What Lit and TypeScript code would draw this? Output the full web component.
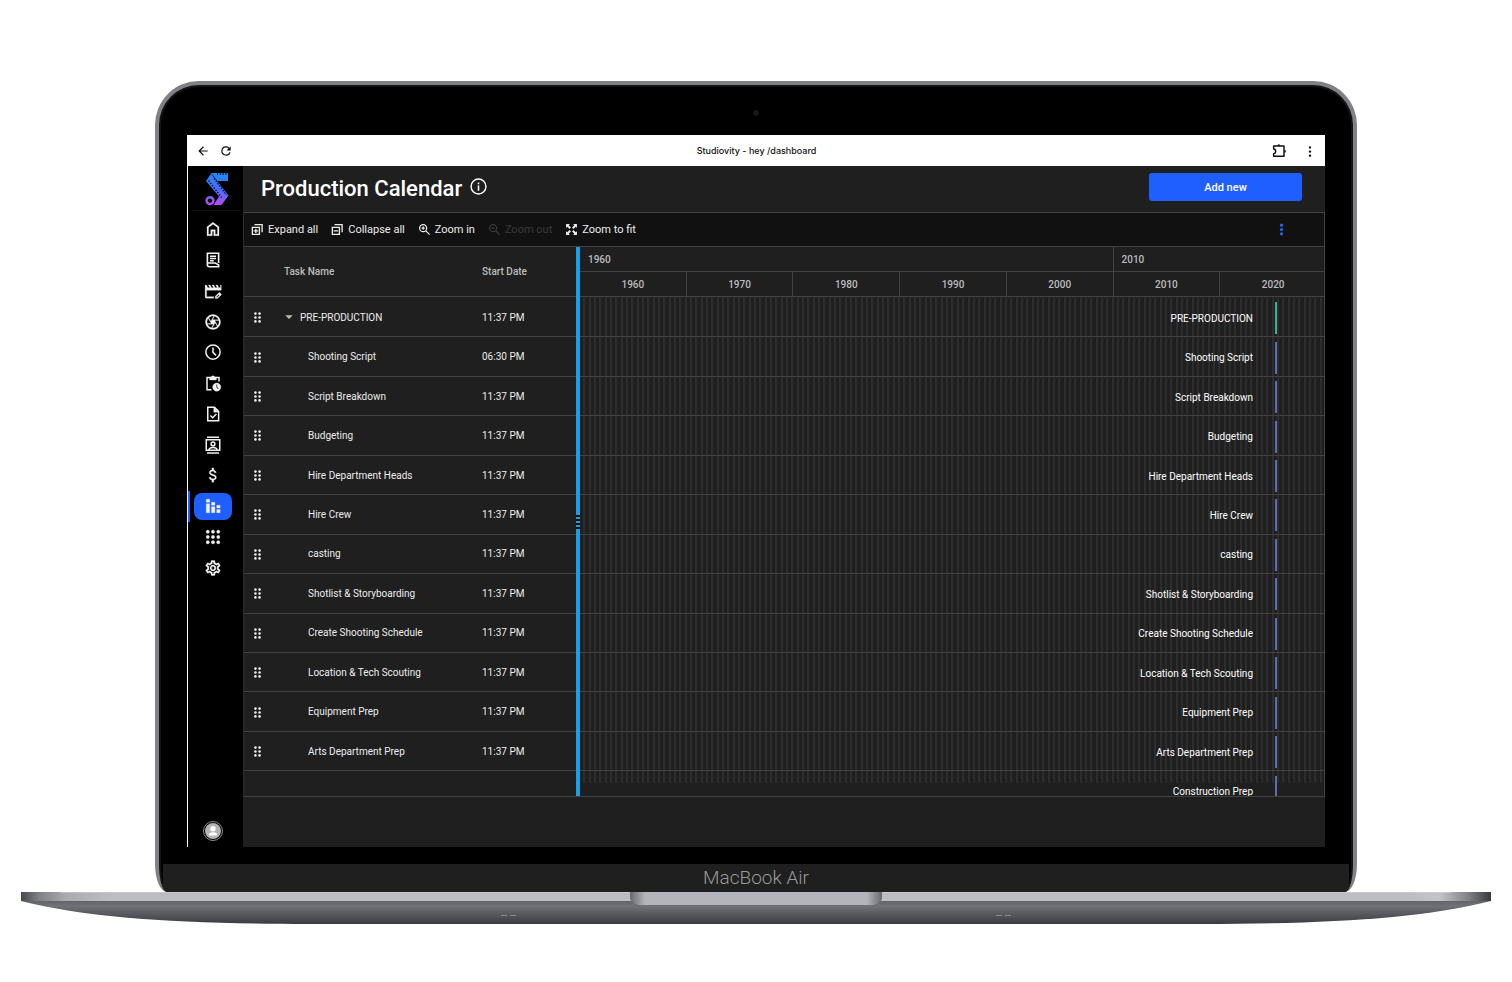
import { LitElement, html, css, svg } from "lit";
import { customElement, property, state } from "lit/decorators.js";
import { classMap } from "lit/directives/class-map.js";

interface Task {
  name: string;
  start: string;
  group?: boolean;
}

const TASKS: Task[] = [
  { name: "PRE-PRODUCTION", start: "11:37 PM", group: true },
  { name: "Shooting Script", start: "06:30 PM" },
  { name: "Script Breakdown", start: "11:37 PM" },
  { name: "Budgeting", start: "11:37 PM" },
  { name: "Hire Department Heads", start: "11:37 PM" },
  { name: "Hire Crew", start: "11:37 PM" },
  { name: "casting", start: "11:37 PM" },
  { name: "Shotlist & Storyboarding", start: "11:37 PM" },
  { name: "Create Shooting Schedule", start: "11:37 PM" },
  { name: "Location & Tech Scouting", start: "11:37 PM" },
  { name: "Equipment Prep", start: "11:37 PM" },
  { name: "Arts Department Prep", start: "11:37 PM" },
];

const DECADES = [1960, 1970, 1980, 1990, 2000, 2010, 2020];

const ICONS: Record<string, unknown> = {
  home: svg`<path d="M6 19h3v-6h6v6h3v-9l-6-4.5L6 10v9Zm-2 2V9l8-6 8 6v12h-7v-6h-2v6H4Z"/>`,
  script: svg`<path fill="none" stroke="currentColor" stroke-width="2.200" d="M19.500 16V3h-15v15.500A2.500 2.500 0 0 0 7 21h12.500v-2.500L15 16H4.500M8 7h8M8 10h8M8 13h5"/>`,
  clapper: svg`<path d="M1.500 4h1.700l2 3.600h2.700L5.900 4h2.200l2 3.600h2.700L10.800 4H13l2 3.600h2.700L15.700 4h2.200l2 3.600H22V4h1v7H3.500v8.500H13v2H3.500a2 2 0 0 1-2-2z"/><path d="M15 22v-3l5.500-5.500 3 3L18 22zm1.700-1.500h.8l3-3-.9-.9-2.900 3z"/>`,
  shutter: svg`<path d="M14.250 2.260l-.08-.04-.01.02C13.460 2.090 12.740 2 12 2 6.480 2 2 6.480 2 12s4.480 10 10 10 10-4.480 10-10c0-4.750-3.310-8.720-7.750-9.740zM19.410 9h-7.990l2.710-4.700c2.400.66 4.350 2.420 5.280 4.700zM13.100 4.080L10.270 9l-1.150 2L6.400 6.300C7.840 4.880 9.820 4 12 4c.37 0 .74.03 1.100.08zM5.700 7.090L8.540 12l1.150 2H4.260C4.100 13.360 4 12.690 4 12c0-1.850.64-3.550 1.700-4.910zM4.590 15h7.980l-2.710 4.700c-2.400-.67-4.340-2.420-5.270-4.700zm6.310 4.910L14.890 13l2.720 4.700C16.160 19.120 14.180 20 12 20c-.38 0-.74-.04-1.100-.09zm7.400-3l-4-6.910h5.430c.17.64.27 1.310.27 2 0 1.850-.64 3.550-1.700 4.910z"/>`,
  clock: svg`<g fill="none" stroke="currentColor" stroke-width="2"><circle cx="12" cy="12" r="9.500"/><path d="M12 6v6.500l4 4"/></g>`,
  clipboard: svg`<g fill="none" stroke="currentColor" stroke-width="2"><path d="M10 21H4V4.500h16V10"/></g><path d="M7.500 4h2.200a2.500 2.500 0 0 1 4.600 0h2.200v4h-9z"/><path fill-rule="evenodd" d="M17 12a5.500 5.500 0 1 0 0 11 5.500 5.500 0 0 0 0-11zm-.6 2h1.200v3.200l2 2-.9.900-2.300-2.400z"/>`,
  doc: svg`<g fill="none" stroke="currentColor" stroke-width="2"><path d="M5 3h9l5.500 5.500V21H5z"/><path d="M8.500 14l3 3 5-5"/></g><path d="M13 3v6.500h6.500z"/>`,
  contact: svg`<g fill="none" stroke="currentColor" stroke-width="2"><path d="M4 1.500h16M4 22.500h16M3 5h18v14H3z"/><circle cx="12" cy="10.500" r="2.500"/><path d="M6.500 19c0-5 11-5 11 0"/></g>`,
  money: svg`<path d="M11.800 10.900c-2.270-.59-3-1.200-3-2.150 0-1.090 1.010-1.850 2.700-1.850 1.780 0 2.440.85 2.500 2.100h2.210c-.07-1.720-1.120-3.300-3.210-3.810V2.500h-2.500v2.660c-1.940.42-3.500 1.680-3.500 3.610 0 2.310 1.910 3.460 4.700 4.130 2.500.6 3 1.480 3 2.410 0 .69-.49 1.790-2.700 1.790-2.060 0-2.870-.92-2.980-2.100h-2.200c.12 2.190 1.260 3.420 3.680 3.830V21.500h2.500v-2.650c1.950-.37 3.500-1.500 3.500-3.550 0-2.840-2.430-3.810-4.700-4.400z"/>`,
  chart: svg`<path d="M3 3h4.500v4H3zM3 9h4.500v12H3zM10 7h4.500v4H10zM10 13h4.500v8H10zM17 11h4.500v3.500H17zM17 16.500h4.500V21H17z"/>`,
  apps: svg`${[5, 12, 19].map((y) => [5, 12, 19].map((x) => svg`<circle cx=${x} cy=${y} r="2.200"/>`))}`,
  settings: svg`<path d="M19.430 12.980c.04-.32.07-.64.07-.98 0-.34-.03-.66-.07-.98l2.110-1.650c.19-.15.24-.42.12-.64l-2-3.460c-.09-.16-.26-.25-.44-.25-.06 0-.12.010-.17.030l-2.490 1c-.52-.4-1.080-.73-1.690-.98l-.38-2.650C14.460 2.180 14.250 2 14 2h-4c-.25 0-.46.18-.49.42l-.38 2.650c-.61.25-1.170.59-1.690.98l-2.490-1c-.06-.02-.12-.03-.18-.03-.17 0-.34.09-.43.25l-2 3.460c-.13.22-.07.49.12.64l2.110 1.650c-.04.32-.07.65-.07.98 0 .33.03.66.07.98l-2.110 1.650c-.19.15-.24.42-.12.64l2 3.460c.09.16.26.25.44.25.06 0 .12-.01.17-.03l2.490-1c.52.4 1.080.73 1.690.98l.38 2.650c.03.24.24.42.49.42h4c.25 0 .46-.18.49-.42l.38-2.650c.61-.25 1.170-.59 1.690-.98l2.490 1c.06.02.12.03.18.03.17 0 .34-.09.43-.25l2-3.460c.12-.22.07-.49-.12-.64l-2.110-1.650zm-1.980-1.710c.04.31.05.52.05.73 0 .21-.02.43-.05.73l-.14 1.130.89.7 1.080.84-.7 1.210-1.270-.51-1.040-.42-.9.68c-.43.32-.84.56-1.250.73l-1.060.43-.16 1.130-.2 1.350h-1.400l-.19-1.350-.16-1.130-1.060-.43c-.43-.18-.83-.41-1.230-.71l-.91-.7-1.060.43-1.270.51-.7-1.210 1.080-.84.89-.7-.14-1.130c-.03-.31-.05-.54-.05-.74s.02-.43.05-.73l.14-1.130-.89-.7-1.080-.84.7-1.210 1.270.51 1.040.42.9-.68c.43-.32.84-.56 1.250-.73l1.060-.43.16-1.130.2-1.350h1.390l.19 1.350.16 1.130 1.060.43c.43.18.83.41 1.230.71l.91.7 1.060-.43 1.270-.51.7 1.210-1.070.85-.89.7.14 1.130zM12 8c-2.210 0-4 1.790-4 4s1.790 4 4 4 4-1.790 4-4-1.790-4-4-4zm0 6c-1.100 0-2-.9-2-2s.9-2 2-2 2 .9 2 2-.9 2-2 2z"/>`,
  expand: svg`<path fill="none" stroke="currentColor" stroke-width="2.500" d="M2.500 8h13v13h-13zM6.500 3h14v14M9 10.500v8M5 14.500h8"/>`,
  collapse: svg`<path fill="none" stroke="currentColor" stroke-width="2.500" d="M2.500 8h13v13h-13zM6.500 3h14v14M5 14.500h8"/>`,
  zoomIn: svg`<path fill="none" stroke="currentColor" stroke-width="2.300" d="M14.500 14.500l7 7M9.500 3a6.500 6.500 0 1 0 0 13 6.500 6.500 0 0 0 0-13zM9.500 6.500v6M6.500 9.500h6"/>`,
  zoomOut: svg`<path fill="none" stroke="currentColor" stroke-width="2.300" d="M14.500 14.500l7 7M9.500 3a6.500 6.500 0 1 0 0 13 6.500 6.500 0 0 0 0-13zM6.500 9.500h6"/>`,
  fit: svg`<path d="M2 2h7L6.800 4.200 11 8.400 8.400 11 4.200 6.800 2 9zM22 2v7l-2.200-2.200-4.200 4.200L13 8.400l4.200-4.200L15 2zM2 22v-7l2.200 2.200L8.400 13l2.600 2.600-4.200 4.200L9 22zM22 22h-7l2.200-2.200-4.200-4.200 2.600-2.600 4.200 4.200L22 15z"/>`,
  back: svg`<path d="M20 11H7.830l5.590-5.590L12 4l-8 8 8 8 1.410-1.410L7.830 13H20v-2z"/>`,
  reload: svg`<path d="M17.650 6.350A7.958 7.958 0 0 0 12 4a8 8 0 1 0 7.730 10h-2.080A6 6 0 1 1 12 6c1.660 0 3.140.69 4.220 1.780L13 11h7V4l-2.350 2.350z"/>`,
  puzzle: svg`<path fill="none" stroke="currentColor" stroke-width="2.200" stroke-linejoin="round" d="M4 4.500h15.500V20H4v-4c4 0 4-7 0-7z"/><path d="M9.500 4a2.300 2.300 0 0 1 4.600 0zM20 10a2.300 2.300 0 0 1 0 4.600z"/>`,
  more: svg`<circle cx="12" cy="6" r="2"/><circle cx="12" cy="13" r="2"/><circle cx="12" cy="20" r="2"/>`,
  moreBold: svg`<circle cx="12" cy="4" r="3"/><circle cx="12" cy="12" r="3"/><circle cx="12" cy="20" r="3"/>`,
  info: svg`<circle cx="12" cy="12" r="10.500" fill="none" stroke="currentColor" stroke-width="2"/><path d="M10.900 10.500h2.200V18h-2.200zM10.900 6.300h2.200v2.400h-2.200z"/>`,
  grip: svg`${[3.500, 12, 20.500].map((y) => [7.500, 16.500].map((x) => svg`<circle cx=${x} cy=${y} r="2.800"/>`))}`,
  caret: svg`<path d="M3 8h18l-9 9z"/>`,
};

@customElement("ui-icon")
export class UiIcon extends LitElement {
  static styles = css`
    :host {
      display: inline-flex;
      flex: none;
      width: 16px;
      height: 16px;
    }
    .glyph {
      width: 100%;
      height: 100%;
      fill: currentColor;
      display: block;
    }
  `;
  @property() name = "";
  render() {
    return html`<svg class="glyph" viewBox="0 0 24 24" aria-hidden="true">${ICONS[this.name]}</svg>`;
  }
}

@customElement("browser-bar")
export class BrowserBar extends LitElement {
  static styles = css`
    :host {
      display: grid;
      grid-template-columns: 1fr auto 1fr;
      align-items: center;
      height: 31px;
      padding: 0 8px 0 9px;
      box-sizing: border-box;
      background: #fff;
      color: #111;
      font-family: Inter, sans-serif;
      font-size: 9px;
      font-weight: 500;
    }
    .side {
      display: flex;
      align-items: center;
      gap: 9px;
    }
    .end {
      justify-content: flex-end;
      gap: 16px;
    }
    .btn {
      display: flex;
      padding: 0;
      border: 0;
      background: none;
      color: inherit;
    }
    .small {
      width: 14px;
      height: 14px;
    }
  `;
  render() {
    return html`
      <div class="side">
        <button class="btn" aria-label="Back"><ui-icon class="small" name="back"></ui-icon></button>
        <button class="btn" aria-label="Reload"><ui-icon class="small" name="reload"></ui-icon></button>
      </div>
      <span>Studiovity - hey /dashboard</span>
      <div class="side end">
        <button class="btn" aria-label="Extensions"><ui-icon name="puzzle"></ui-icon></button>
        <button class="btn" aria-label="Menu"><ui-icon class="small" name="more"></ui-icon></button>
      </div>
    `;
  }
}

@customElement("side-nav")
export class SideNav extends LitElement {
  static styles = css`
    :host {
      display: flex;
      flex-direction: column;
      align-items: stretch;
      flex: none;
      width: 56px;
      box-sizing: border-box;
      border-left: 1px solid #fff;
      background: #000;
      color: #f2f2f2;
    }
    .logo {
      display: flex;
      justify-content: center;
      padding: 5px 0 4px;
      margin: 0 3px 3px;
      border-bottom: 1px solid #111;
    }
    .mark {
      width: 28px;
      height: 35px;
    }
    .links {
      display: grid;
      grid-template-rows: repeat(12, 1fr);
      height: 369px;
    }
    .link {
      display: flex;
      align-items: center;
      padding: 0 12px 0 4px;
      border-left: 2px solid transparent;
      color: inherit;
    }
    .pill {
      display: flex;
      align-items: center;
      justify-content: center;
      width: 38px;
      height: 27px;
      border-radius: 8px;
    }
    .active {
      border-left-color: #1f5eff;
      border-radius: 0 2px 2px 0;
    }
    .active .pill {
      background: #1f5eff;
    }
    .nav-icon {
      width: 18px;
      height: 18px;
      stroke: currentColor;
      stroke-width: 0.4;
    }
    .user {
      display: block;
      width: 22px;
      height: 22px;
      margin: auto 0 5px 14px;
      padding: 0;
      border: 0;
      background: none;
    }
    .avatar {
      display: block;
      width: 22px;
      height: 22px;
    }
  `;
  @property() active = "chart";
  private items: [string, string][] = [
    ["home", "Home"],
    ["script", "Script"],
    ["clapper", "Breakdown"],
    ["shutter", "Shots"],
    ["clock", "Schedule"],
    ["clipboard", "Stripboard"],
    ["doc", "Documents"],
    ["contact", "Contacts"],
    ["money", "Budget"],
    ["chart", "Production calendar"],
    ["apps", "Apps"],
    ["settings", "Settings"],
  ];
  render() {
    return html`
      <div class="logo">
        <svg class="mark" viewBox="0 0 28 35" role="img" aria-label="Studiovity">
          <defs>
            <linearGradient id="ink" gradientUnits="userSpaceOnUse" x1="14" y1="2" x2="10" y2="34">
              <stop offset="0" stop-color="#1c8bf5" />
              <stop offset="0.5" stop-color="#4a6cf5" />
              <stop offset="1" stop-color="#b64df5" />
            </linearGradient>
          </defs>
          <path
            fill="url(#ink)"
            fill-rule="evenodd"
            d="M9.500 2H26V10H15L26.500 24.500L19.500 34H11.500L17 25.500L4 10Z M8 25a4.600 4.600 0 1 0 .01 0z M8 27.400a2.200 2.200 0 1 1-.01 0z"
          />
          <path d="M6.500 9.500L19.500 26.500M12 7.500L24.500 24" stroke="#0c1450" stroke-width="1.400" stroke-dasharray="1.500 1.400" fill="none" />
          <path d="M15 3H26" stroke="#000" stroke-width="2" stroke-dasharray="1 1.800" fill="none" />
          <path d="M10 3.500L15 10" stroke="#0c1450" stroke-width="0.900" />
        </svg>
      </div>
      <nav class="links">
        ${this.items.map(
          ([icon, label]) => html`<a
            class=${classMap({ link: true, active: icon === this.active })}
            href="#"
            aria-label=${label}
            ><span class="pill"><ui-icon class="nav-icon" name=${icon}></ui-icon></span
          ></a>`
        )}
      </nav>
      <button class="user" aria-label="Account">
        <svg class="avatar" viewBox="0 0 22 22">
          <circle cx="11" cy="11" r="9.500" fill="none" stroke="#8a8a8a" />
          <circle cx="11" cy="11" r="8" fill="#b4b4b4" />
          <circle cx="11" cy="8.700" r="2.700" fill="#fff" />
          <path d="M7 15.500V14.500c0-3 8-3 8 0v1z" fill="#fff" />
        </svg>
      </button>
    `;
  }
}

@customElement("gantt-chart")
export class GanttChart extends LitElement {
  static styles = css`
    :host {
      display: flex;
      border: solid #424242;
      border-width: 1px 1px 1px 0;
      font-size: 10px;
      color: #ededed;
    }
    .tasks {
      display: block;
      width: 332px;
      flex: none;
      font-size: inherit;
    }
    .tasks thead,
    .tasks tbody {
      display: block;
    }
    .tasks tr {
      display: grid;
      grid-template-columns: 40px 198px 1fr;
      align-items: center;
      border-bottom: 1px solid #424242;
    }
    .tasks thead tr {
      height: 50px;
      box-sizing: border-box;
    }
    .tasks th {
      padding: 0;
      text-align: left;
      font-weight: 500;
      color: #bdbdbd;
    }
    .tasks td {
      padding: 0;
    }
    .tasks .rows,
    .rows {
      display: grid;
      height: 499px;
      box-sizing: border-box;
      padding-top: 1px;
      overflow: hidden;
      grid-template-rows: repeat(12, minmax(0, 8fr)) minmax(0, 5fr);
    }
    .grip {
      width: 11px;
      height: 11px;
      margin-left: 8px;
      vertical-align: middle;
    }
    .name {
      padding-left: 24px;
    }
    .name-group {
      display: flex;
      align-items: center;
      gap: 6px;
    }
    .toggle {
      display: flex;
      padding: 0;
      border: 0;
      background: none;
      color: #bdbdbd;
    }
    .caret {
      width: 10px;
      height: 10px;
    }
    .splitter {
      display: flex;
      flex-direction: column;
      width: 4px;
      flex: none;
      gap: 1px;
      background: #111;
    }
    .rail {
      flex: 1;
      background: #189fe6;
    }
    .knobs {
      display: flex;
      flex-direction: column;
      gap: 2px;
      padding: 1px 0;
    }
    .knob {
      height: 2px;
      background: #189fe6;
    }
    .timeline {
      flex: 1;
      min-width: 0;
      overflow: hidden;
    }
    .canvas {
      width: calc(100% + 3px);
    }
    .scale {
      display: grid;
      grid-template-columns: repeat(7, 1fr);
      height: 25px;
      box-sizing: border-box;
      border-bottom: 1px solid #424242;
      font-weight: 500;
      color: #bdbdbd;
    }
    .era {
      display: flex;
      align-items: center;
      padding-left: 8px;
      border-right: 1px solid #424242;
      grid-column: span 5;
    }
    .late {
      grid-column: span 2;
    }
    .decade {
      display: flex;
      align-items: center;
      justify-content: center;
      border-right: 1px solid #424242;
    }
    .lanes {
      background: repeating-linear-gradient(
          90deg,
          #1f1f1f 0,
          #1f1f1f calc(100% / 140 - 2px),
          #2d2d2d calc(100% / 140 - 2px),
          #2d2d2d calc(100% / 140)
        )
        top / 100% calc(100% - 13px) no-repeat;
    }
    .lane {
      display: flex;
      justify-content: flex-end;
      align-items: center;
      gap: 22px;
      padding: 2px 50px 0 0;
      border-bottom: 1px solid #424242;
      color: #fff;
    }
    .cut {
      height: 37px;
      border-bottom: 0;
    }
    .bar {
      width: 2px;
      height: 32px;
      background: #5c6db3;
    }
    .bar-group {
      background: #3fb295;
    }
  `;

  private taskRow(t: Task) {
    return html`<tr>
      <td><ui-icon class="grip" name="grip"></ui-icon></td>
      <td>
        ${t.group
          ? html`<div class="name-group">
              <button class="toggle" aria-label="Collapse group"><ui-icon class="caret" name="caret"></ui-icon></button
              >${t.name}
            </div>`
          : html`<div class="name">${t.name}</div>`}
      </td>
      <td>${t.start}</td>
    </tr>`;
  }

  private lane(t: Task, cut = false) {
    return html`<div class=${classMap({ lane: true, cut })}>
      <span>${t.name}</span><i class=${classMap({ bar: true, "bar-group": !!t.group })}></i>
    </div>`;
  }

  render() {
    return html`
      <table class="tasks">
        <thead>
          <tr>
            <th></th>
            <th>Task Name</th>
            <th>Start Date</th>
          </tr>
        </thead>
        <tbody class="rows">
          ${TASKS.map((t) => this.taskRow(t))}
        </tbody>
      </table>
      <div class="splitter" role="separator" aria-orientation="vertical">
        <div class="rail"></div>
        <div class="knobs"><i class="knob"></i><i class="knob"></i><i class="knob"></i></div>
        <div class="rail"></div>
      </div>
      <div class="timeline">
        <div class="canvas">
          <div class="scale">
            <div class="era">1960</div>
            <div class="era late">2010</div>
          </div>
          <div class="scale">${DECADES.map((d) => html`<div class="decade">${d}</div>`)}</div>
          <div class="rows lanes">
            ${TASKS.map((t) => this.lane(t))} ${this.lane({ name: "Construction Prep", start: "11:37 PM" }, true)}
          </div>
        </div>
      </div>
    `;
  }
}

@customElement("calendar-page")
export class CalendarPage extends LitElement {
  static styles = css`
    :host {
      display: block;
      flex: 1;
      min-width: 0;
      padding-bottom: 50px;
      background: #1f1f1f;
      color: #fff;
      font-family: Roboto, sans-serif;
    }
    .head {
      display: flex;
      align-items: center;
      height: 46px;
      padding: 0 23px 0 18px;
    }
    .title {
      margin: 0;
      font-size: 22px;
      line-height: 28px;
      font-weight: 500;
    }
    .info {
      width: 17px;
      height: 17px;
      margin: 0 0 5px 8px;
    }
    .add {
      width: 153px;
      height: 28px;
      margin: 0 0 4px auto;
      border: 0;
      border-radius: 3px;
      background: #1f5eff;
      color: #fff;
      font: 500 11px Roboto, sans-serif;
    }
    .panel {
      border-left: 1px solid #2c2c2c;
    }
    .toolbar {
      display: flex;
      align-items: center;
      gap: 13px;
      height: 34px;
      box-sizing: border-box;
      padding: 0 36px 0 7px;
      border: solid #424242;
      border-width: 1px 1px 0 0;
      background: #111;
    }
    .tool {
      display: flex;
      align-items: center;
      gap: 4px;
      padding: 0;
      border: 0;
      background: none;
      color: #ededed;
      font: 11px Roboto, sans-serif;
      white-space: nowrap;
    }
    .tool:disabled {
      color: #3a3a3a;
    }
    .tool-icon {
      width: 13px;
      height: 13px;
    }
    .more {
      margin-left: auto;
      color: #2a62f0;
    }
  `;
  @state() private atMinZoom = true;
  private tool(icon: string, label: string, disabled = false) {
    return html`<button class="tool" ?disabled=${disabled}>
      <ui-icon class="tool-icon" name=${icon}></ui-icon>${label}
    </button>`;
  }
  render() {
    return html`
      <header class="head">
        <h1 class="title">Production Calendar</h1>
        <ui-icon class="info" name="info"></ui-icon>
        <button class="add">Add new</button>
      </header>
      <div class="panel">
        <div class="toolbar">
          ${this.tool("expand", "Expand all")} ${this.tool("collapse", "Collapse all")}
          ${this.tool("zoomIn", "Zoom in")} ${this.tool("zoomOut", "Zoom out", this.atMinZoom)}
          ${this.tool("fit", "Zoom to fit")}
          <button class="tool more" aria-label="More"><ui-icon class="tool-icon" name="moreBold"></ui-icon></button>
        </div>
        <gantt-chart></gantt-chart>
      </div>
    `;
  }
}

@customElement("laptop-base")
export class LaptopBase extends LitElement {
  static styles = css`
    :host {
      display: block;
      height: 32px;
    }
    .art {
      display: block;
      width: 100%;
      height: 100%;
    }
  `;
  render() {
    return html`<svg class="art" viewBox="0 0 1470 32" preserveAspectRatio="none" aria-hidden="true">
      <defs>
        <linearGradient id="body" x1="0" y1="0" x2="0" y2="1">
          <stop offset="0" stop-color="#606166" />
          <stop offset="0.25" stop-color="#717277" />
          <stop offset="0.6" stop-color="#57585c" />
          <stop offset="1" stop-color="#3a3a3f" />
        </linearGradient>
        <linearGradient id="deck">
          <stop offset="0" stop-color="#48494c" />
          <stop offset="0.012" stop-color="#7f8084" />
          <stop offset="0.03" stop-color="#a9aaae" />
          <stop offset="0.06" stop-color="#bcbcc1" />
          <stop offset="0.94" stop-color="#bcbcc1" />
          <stop offset="0.965" stop-color="#c4c4c8" />
          <stop offset="0.985" stop-color="#7f8084" />
          <stop offset="1" stop-color="#38393c" />
        </linearGradient>
        <linearGradient id="notch">
          <stop offset="0" stop-color="#67686c" />
          <stop offset="0.06" stop-color="#b4b5ba" />
          <stop offset="0.94" stop-color="#b4b5ba" />
          <stop offset="1" stop-color="#67686c" />
        </linearGradient>
      </defs>
      <path fill="url(#body)" d="M0 8H1470V9C1400 27 1300 32 1180 32H290C170 32 70 27 0 9Z" />
      <path fill="url(#deck)" d="M0 0H1470V9H0Z" />
      <path fill="#d2d2d6" d="M40 0H1430V1H40Z" opacity="0.600" />
      <path fill="url(#notch)" d="M609 0H861V5Q861 13 849 13H621Q609 13 609 5Z" />
      <path fill="#88898d" d="M480 23h6v1h-6zM489 23h6v1h-6zM975 23h6v1h-6zM984 23h6v1h-6z" />
    </svg>`;
  }
}

@customElement("app-root")
export class AppRoot extends LitElement {
  static styles = css`
    :host {
      display: block;
      padding: 81px 21px 58px;
      background: #fff;
    }
    .lid {
      margin: 0 134px;
      border: 4px solid #7f8184;
      border-bottom: 0;
      border-radius: 44px 44px 12px 12px / 44px 44px 28px 28px;
      background: #000;
      box-shadow: inset 0 0 0 2px #141416;
      overflow: hidden;
    }
    .bezel {
      display: flex;
      justify-content: center;
      align-items: center;
      height: 50px;
      padding-top: 6px;
      box-sizing: border-box;
    }
    .camera {
      width: 6px;
      height: 6px;
      border-radius: 50%;
      background: #17171c;
    }
    .screen {
      margin: 0 28px 17px;
    }
    .app {
      display: flex;
    }
    .chin {
      height: 28px;
      margin: 0 4px;
      background: #1f1f1f;
      color: #9a9a9c;
      text-align: center;
      font: 300 19px/28px Roboto, sans-serif;
    }
  `;
  render() {
    return html`
      <div class="lid">
        <div class="bezel"><i class="camera"></i></div>
        <div class="screen">
          <browser-bar></browser-bar>
          <div class="app">
            <side-nav></side-nav>
            <calendar-page></calendar-page>
          </div>
        </div>
        <div class="chin">MacBook Air</div>
      </div>
      <laptop-base></laptop-base>
    `;
  }
}
